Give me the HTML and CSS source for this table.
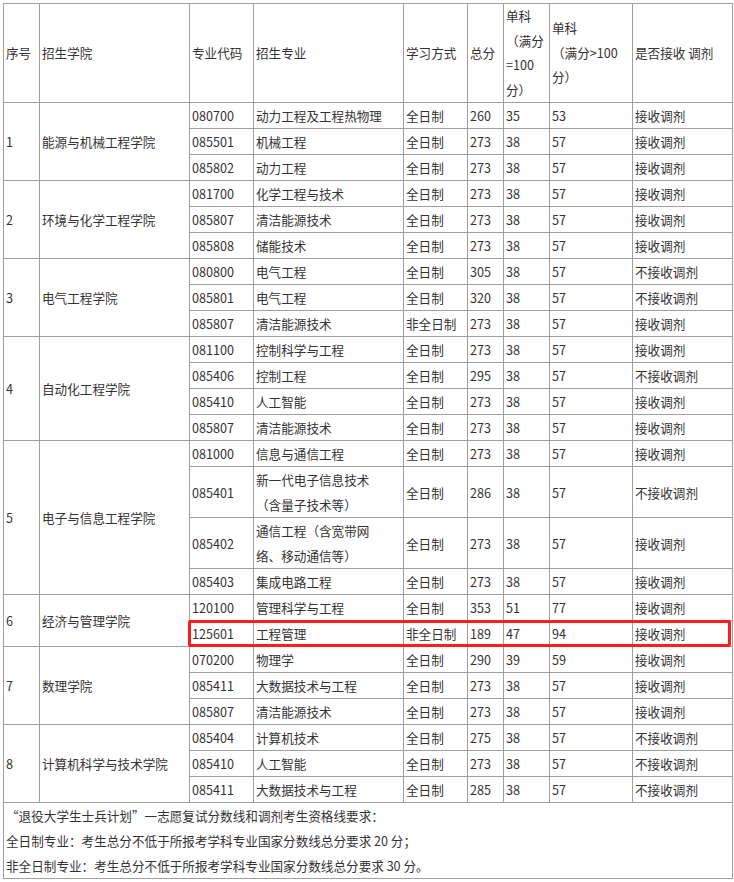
FILE: index.html
```html
<!DOCTYPE html>
<html lang="zh">
<head>
<meta charset="utf-8">
<link rel="stylesheet" href="styles.css">
</head>
<body>
<div class="wrap">
<table class="t">
<colgroup>
<col class="c1"><col class="c2"><col class="c3"><col class="c4"><col class="c5"><col class="c6"><col class="c7"><col class="c8"><col class="c9">
</colgroup>
<thead>
<tr class="head">
<td>序号</td><td>招生学院</td><td>专业代码</td><td>招生专业</td><td>学习方式</td><td>总分</td><td>单科<br>（满分<br>=100<br>分）</td><td>单科<br>（满分&gt;100<br>分）</td><td>是否接收 调剂</td>
</tr>
</thead>
<tbody>
<tr><td rowspan="3">1</td><td rowspan="3">能源与机械工程学院</td><td>080700</td><td>动力工程及工程热物理</td><td>全日制</td><td>260</td><td>35</td><td>53</td><td>接收调剂</td></tr>
<tr><td>085501</td><td>机械工程</td><td>全日制</td><td>273</td><td>38</td><td>57</td><td>接收调剂</td></tr>
<tr><td>085802</td><td>动力工程</td><td>全日制</td><td>273</td><td>38</td><td>57</td><td>接收调剂</td></tr>

<tr><td rowspan="3">2</td><td rowspan="3">环境与化学工程学院</td><td>081700</td><td>化学工程与技术</td><td>全日制</td><td>273</td><td>38</td><td>57</td><td>接收调剂</td></tr>
<tr><td>085807</td><td>清洁能源技术</td><td>全日制</td><td>273</td><td>38</td><td>57</td><td>接收调剂</td></tr>
<tr><td>085808</td><td>储能技术</td><td>全日制</td><td>273</td><td>38</td><td>57</td><td>接收调剂</td></tr>

<tr><td rowspan="3">3</td><td rowspan="3">电气工程学院</td><td>080800</td><td>电气工程</td><td>全日制</td><td>305</td><td>38</td><td>57</td><td>不接收调剂</td></tr>
<tr><td>085801</td><td>电气工程</td><td>全日制</td><td>320</td><td>38</td><td>57</td><td>不接收调剂</td></tr>
<tr><td>085807</td><td>清洁能源技术</td><td>非全日制</td><td>273</td><td>38</td><td>57</td><td>接收调剂</td></tr>

<tr><td rowspan="4">4</td><td rowspan="4">自动化工程学院</td><td>081100</td><td>控制科学与工程</td><td>全日制</td><td>273</td><td>38</td><td>57</td><td>接收调剂</td></tr>
<tr><td>085406</td><td>控制工程</td><td>全日制</td><td>295</td><td>38</td><td>57</td><td>不接收调剂</td></tr>
<tr><td>085410</td><td>人工智能</td><td>全日制</td><td>273</td><td>38</td><td>57</td><td>接收调剂</td></tr>
<tr><td>085807</td><td>清洁能源技术</td><td>全日制</td><td>273</td><td>38</td><td>57</td><td>接收调剂</td></tr>

<tr><td rowspan="4">5</td><td rowspan="4">电子与信息工程学院</td><td>081000</td><td>信息与通信工程</td><td>全日制</td><td>273</td><td>38</td><td>57</td><td>接收调剂</td></tr>
<tr><td>085401</td><td>新一代电子信息技术<br>（含量子技术等）</td><td>全日制</td><td>286</td><td>38</td><td>57</td><td>不接收调剂</td></tr>
<tr><td>085402</td><td>通信工程（含宽带网<br>络、移动通信等）</td><td>全日制</td><td>273</td><td>38</td><td>57</td><td>接收调剂</td></tr>
<tr><td>085403</td><td>集成电路工程</td><td>全日制</td><td>273</td><td>38</td><td>57</td><td>接收调剂</td></tr>

<tr><td rowspan="2">6</td><td rowspan="2">经济与管理学院</td><td>120100</td><td>管理科学与工程</td><td>全日制</td><td>353</td><td>51</td><td>77</td><td>接收调剂</td></tr>
<tr><td>125601</td><td>工程管理</td><td>非全日制</td><td>189</td><td>47</td><td>94</td><td>接收调剂</td></tr>

<tr><td rowspan="3">7</td><td rowspan="3">数理学院</td><td>070200</td><td>物理学</td><td>全日制</td><td>290</td><td>39</td><td>59</td><td>接收调剂</td></tr>
<tr><td>085411</td><td>大数据技术与工程</td><td>全日制</td><td>273</td><td>38</td><td>57</td><td>接收调剂</td></tr>
<tr><td>085807</td><td>清洁能源技术</td><td>全日制</td><td>273</td><td>38</td><td>57</td><td>接收调剂</td></tr>

<tr><td rowspan="3">8</td><td rowspan="3">计算机科学与技术学院</td><td>085404</td><td>计算机技术</td><td>全日制</td><td>275</td><td>38</td><td>57</td><td>不接收调剂</td></tr>
<tr><td>085410</td><td>人工智能</td><td>全日制</td><td>273</td><td>38</td><td>57</td><td>不接收调剂</td></tr>
<tr><td>085411</td><td>大数据技术与工程</td><td>全日制</td><td>285</td><td>38</td><td>57</td><td>不接收调剂</td></tr>

<tr><td colspan="9" class="note">“退役大学生士兵计划”一志愿复试分数线和调剂考生资格线要求：<br>全日制专业：考生总分不低于所报考学科专业国家分数线总分要求 20 分；<br>非全日制专业：考生总分不低于所报考学科专业国家分数线总分要求 30 分。</td></tr>
</tbody>
</table>
<div class="mark"></div>
</div>
</body>
</html>
```

FILE: styles.css
```css
html, body {
  margin: 0;
  padding: 0;
  background: #fff;
}
.wrap {
  position: relative;
  padding: 3px 0 0 3px;
}
.t {
  border-collapse: collapse;
  table-layout: fixed;
  width: 729px;
  font-family: "Noto Sans CJK SC", "Noto Sans", sans-serif;
  font-size: 12.6px;
  line-height: 25px;
  color: #333;
}
.c1 { width: 36px; }
.c2 { width: 150px; }
.c3 { width: 64px; }
.c4 { width: 150px; }
.c5 { width: 64px; }
.c6 { width: 36px; }
.c7 { width: 46px; }
.c8 { width: 83px; }
.c9 { width: 100px; }
.t td {
  border: 1px solid #a0a0a0;
  padding: 0 0 0 2px;
  vertical-align: middle;
  text-align: left;
  word-break: break-all;
}
.head td {
  height: 98px;
  line-height: 24.5px;
}
.t td.note {
  padding-left: 2px;
}
.mark {
  position: absolute;
  left: 188px;
  top: 620px;
  width: 537px;
  height: 21px;
  border: 3px solid #ff1c1c;
  border-radius: 2px;
  pointer-events: none;
}
```
